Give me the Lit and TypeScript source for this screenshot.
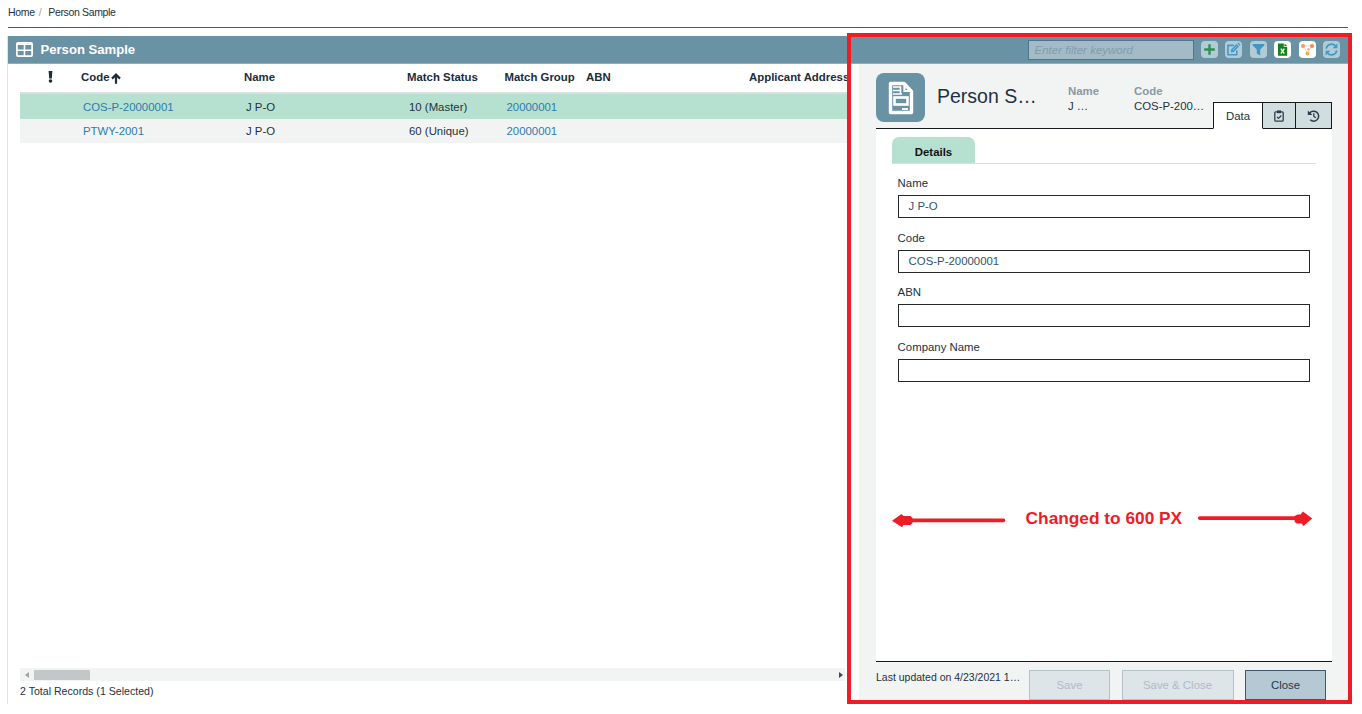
import { LitElement, html, css, svg } from "lit";
import { customElement } from "lit/decorators.js";
import { classMap } from "lit/directives/class-map.js";

interface PersonRow {
  code: string;
  name: string;
  status: string;
  group: string;
  selected: boolean;
}

const ROWS: PersonRow[] = [
  { code: "COS-P-20000001", name: "J P-O", status: "10 (Master)", group: "20000001", selected: true },
  { code: "PTWY-2001", name: "J P-O", status: "60 (Unique)", group: "20000001", selected: false },
];

const FIELDS = [
  { label: "Name", value: "J P-O" },
  { label: "Code", value: "COS-P-20000001" },
  { label: "ABN", value: "" },
  { label: "Company Name", value: "" },
];

const TOOLS = [
  {
    name: "add",
    solid: false,
    art: svg`<path d="M8.5 3.2v10.6M3.2 8.5h10.6" stroke="#2f9150" stroke-width="2.4" fill="none"/>`,
  },
  {
    name: "edit",
    solid: false,
    art: svg`<path d="M11.8 9.6v4.2H2.9V4.4h6" stroke="#3f9bca" stroke-width="1.6" fill="none" stroke-linejoin="round"/>
      <path d="M5.8 11.4l.4-3 5.2-5.4 2.600 2.500-5.200 5.400z" fill="#3f9bca"/><path d="M12.200 2.300l1-.9 2.400 2.400-1 .9z" fill="#3f9bca"/>
      <path d="M7.900 9.300l3.800-4" stroke="#b4cad5" stroke-width=".7"/>`,
  },
  {
    name: "filter",
    solid: false,
    art: svg`<path d="M2.6 3h11.8v1.3L10.2 8.6v5.8l-3.4-2V8.6L2.6 4.3z" fill="#3f97c4"/>`,
  },
  {
    name: "excel",
    solid: true,
    art: svg`<path d="M4 2.4h5.8v3.4h3.4v9H4z" fill="#15831c"/><path d="M10.5 2.4l2.7 2.7h-2.7z" fill="#15831c"/>
      <path d="M6.9 7.6l3.4 5M10.3 7.6l-3.4 5" stroke="#fff" stroke-width="1.4"/>`,
  },
  {
    name: "graph",
    solid: true,
    art: svg`<path d="M4 4.9L8.5 12l4.3-7M4 4.9h9" stroke="#f7cdb4" stroke-width=".9" fill="none"/>
      <circle cx="4" cy="4.9" r="2" fill="#ef9a6a"/><circle cx="13" cy="4.9" r="2" fill="#f3854f"/><circle cx="9.4" cy="8.2" r="1.2" fill="#f4b08a"/>
      <circle cx="8.5" cy="12.6" r="2" fill="#eea95f"/>`,
  },
  {
    name: "refresh",
    solid: false,
    art: svg`<path d="M3.2 7.6A5.4 5.4 0 0 1 12.6 5M13.8 9.4A5.4 5.4 0 0 1 4.4 12" stroke="#3f9bca" stroke-width="1.7" fill="none"/>
      <path d="M14.4 2.4v4.9H9.5zM2.6 14.6V9.7h4.9z" fill="#3f9bca"/>`,
  },
];

@customElement("app-root")
export class AppRoot extends LitElement {
  static styles = css`
    :host {
      display: block;
      position: relative;
      width: 1362px;
      height: 714px;
      overflow: hidden;
      background: #fff;
      color: #22313f;
      font: 11.4px/14px "Liberation Sans", Arial, sans-serif;
    }
    * { box-sizing: border-box; }
    svg { display: block; flex: none; }
    .crumbs {
      display: flex;
      height: 28px;
      margin: 0 14px 0 8px;
      padding-top: 5px;
      border-bottom: 1px solid #44586a;
      font-size: 10.5px;
      letter-spacing: -0.34px;
    }
    .slash { margin: 0 7px 0 4px; color: #9aa3aa; }
    .window {
      display: flex;
      flex-direction: column;
      width: 1341px;
      height: 668px;
      margin: 8px 0 0 7px;
      border-left: 1px solid #e1e4e6;
    }
    .bar {
      display: flex;
      align-items: center;
      flex: none;
      height: 28px;
      padding: 0 8px 0 8px;
      background: #6992a5;
      border-bottom: 1px solid #8fadbb;
      color: #fff;
    }
    .bar-title { margin-left: 7.5px; font-size: 13.1px; font-weight: bold; }
    .filter {
      width: 166px;
      height: 20px;
      margin-left: auto;
      padding: 2px 6px;
      background: #a3bbc7;
      border: 1px solid #4d7591;
      color: #7f9dac;
      font-size: 11.5px;
      font-style: italic;
    }
    .tools { display: flex; gap: 7.4px; margin-left: 7.5px; }
    .tool { width: 17px; height: 17px; border-radius: 4px; background: #b4cad5; }
    .solid { background: #fff; }
    .body { display: flex; flex: 1; min-height: 0; }
    .list {
      display: flex;
      flex-direction: column;
      width: 851px;
      padding-left: 12px;
    }
    .row {
      display: grid;
      grid-template-columns: 61px 163px 163px 97.5px 81.5px 163px 1fr;
      align-items: center;
      height: 24px;
      width: 827px;
      padding-left: 2px;
      background: #f2f4f4;
      white-space: nowrap;
      overflow: hidden;
    }
    .row.selected { background: #b6e1d1; height: 25px; }
    .row.head {
      height: 30px;
      padding: 0 0 2px;
      background: #fff;
      border-bottom: 2px solid #dadfdf;
      color: #1d2c3b;
      font-weight: bold;
    }
    .bang { padding-left: 28px; }
    .sort { display: flex; align-items: center; gap: 1.5px; }
    .arrow { padding-top: 3px; }
    .link { color: #2b7cae; }
    .scroll {
      display: flex;
      align-items: center;
      justify-content: space-between;
      height: 13px;
      width: 825px;
      margin-top: auto;
      padding: 0 2px 0 5px;
      background: #f2f3f3;
    }
    .thumb { width: 56px; height: 10px; margin: 0 auto 0 5px; background: #c3c7c8; }
    .total { margin: 3px 0 6px; font-size: 10.6px; }
    .detail {
      display: flex;
      flex-direction: column;
      flex: 1;
      padding: 0 16px 0 17px;
      background: #f2f4f4;
    }
    .summary { display: flex; flex: none; height: 64px; padding-top: 9px; }
    .badge {
      display: grid;
      place-items: center;
      width: 49px;
      height: 49px;
      border-radius: 8px;
      background: #6992a5;
    }
    .title { width: 131px; margin: 9px 0 0 12px; font-size: 19.5px; line-height: 28px; white-space: nowrap; }
    .fact { width: 66px; padding-top: 11px; line-height: 15px; white-space: nowrap; }
    .fact-label { color: #8899a3; font-weight: bold; }
    .tabs { display: flex; width: 119px; height: 27px; margin: 29px 0 0 auto; }
    .tab {
      display: grid;
      place-items: center;
      width: 33px;
      border: 1px solid #15191d;
      border-left: 0;
      background: #d0dedf;
    }
    .tab-active { width: 50px; background: #fff; border-left: 1px solid #15191d; border-bottom-color: #fff; }
    .tab-last { width: 36px; }
    .rule { flex: none; height: 1px; margin-right: 119px; background: #15191d; }
    .card {
      flex: none;
      height: 533px;
      padding: 8px 16px 0;
      background: #fff;
      border-bottom: 1px solid #15191d;
    }
    .section { display: flex; border-bottom: 1px solid #dcdfe0; }
    .section-tab {
      width: 83px;
      padding: 8px 0 4px;
      border-radius: 7px 7px 0 0;
      background: #b6e1d1;
      color: #111;
      font-weight: bold;
      text-align: center;
    }
    .form { padding: 12px 6px 0 5.6px; }
    .field { height: 54.6px; }
    .box {
      height: 23px;
      margin-top: 5px;
      padding: 3px 10px;
      border: 1px solid #25292c;
      color: #31536a;
    }
    .foot { display: flex; padding-top: 8px; }
    .updated { width: 153px; font-size: 10.5px; white-space: nowrap; }
    .buttons { display: flex; gap: 11.5px; }
    .btn {
      display: grid;
      place-items: center;
      width: 81px;
      height: 30px;
      border: 1px solid #b3c3ca;
      background: #dde5e8;
      color: #aebcc2;
    }
    .btn.wide { width: 112px; }
    .btn.primary { background: #b5c9d5; border-color: #41566c; color: #25394a; }
    .frame {
      position: absolute;
      left: 847px;
      top: 33px;
      width: 505px;
      height: 671px;
      border: 4px solid #ee1c25;
    }
    .note {
      position: absolute;
      left: 891px;
      top: 509px;
      display: flex;
      width: 422px;
      color: #ee1c25;
      font-size: 17.3px;
      font-weight: bold;
      line-height: 18px;
      white-space: nowrap;
    }
    .note-text { flex: 1; padding-left: 19.6px; }
  `;

  render() {
    return html`
      <nav class="crumbs"><span>Home</span><span class="slash">/</span><span>Person Sample</span></nav>
      <main class="window">
        <header class="bar">
          <svg width="17" height="15" viewBox="0 0 17 15">
            <rect x=".9" y=".9" width="15.2" height="13.2" rx="1" fill="none" stroke="#fff" stroke-width="1.7" />
            <path d="M1 2.2h15M8.5 2v12M1 8.3h15" stroke="#fff" stroke-width="1.6" />
          </svg>
          <span class="bar-title">Person Sample</span>
          <div class="filter">Enter filter keyword</div>
          <div class="tools">
            ${TOOLS.map(
              (t) => html`<div class=${classMap({ tool: true, solid: t.solid })}>
                <svg width="17" height="17" viewBox="0 0 17 17">${t.art}</svg>
              </div>`
            )}
          </div>
        </header>
        <div class="body">${this.renderList()}${this.renderDetail()}</div>
      </main>
      <div class="frame"></div>
      <div class="note">
        <svg width="115" height="20" viewBox="0 0 115 20">
          <path d="M18 11.4h94.5" stroke="#ee1c25" stroke-width="3.6" stroke-linecap="round" />
          <path d="M1 11.8L10.5 5l2 2h7l2 2v5l-2 2h-7l-1.5 2.2z" fill="#ee1c25" />
        </svg>
        <span class="note-text">Changed to 600 PX</span>
        <svg width="116" height="20" viewBox="0 0 116 20">
          <path d="M2.8 9.1H100" stroke="#ee1c25" stroke-width="3.8" stroke-linecap="round" />
          <path d="M115.2 9.6L106.5 17l-2-2.5h-5l-2-2V7l3-1.5h3l2.5-3z" fill="#ee1c25" />
        </svg>
      </div>
    `;
  }

  private renderList() {
    return html`<section class="list">
      <div class="row head">
        <span class="bang">
          <svg width="5" height="12" viewBox="0 0 5 12">
            <path d="M.6 0h3.8l-.6 7.4H1.2z" fill="#1d2c3b" /><circle cx="2.5" cy="10" r="1.8" fill="#1d2c3b" />
          </svg>
        </span>
        <span class="sort">Code
          <svg class="arrow" width="10" height="14" viewBox="0 0 10 11">
            <path d="M5 10.8V2M1 5.600L5 1.600l4 4" fill="none" stroke="#1d2c3b" stroke-width="2.2" />
          </svg>
        </span>
        <span>Name</span><span>Match Status</span><span>Match Group</span><span>ABN</span><span>Applicant Address</span>
      </div>
      ${ROWS.map(
        (r) => html`<div class=${classMap({ row: true, selected: r.selected })}>
          <span></span><span class="link">${r.code}</span><span>${r.name}</span><span>${r.status}</span>
          <span class="link">${r.group}</span>
        </div>`
      )}
      <div class="scroll">
        <svg width="4" height="6" viewBox="0 0 4 6"><path d="M4 0v6L0 3z" fill="#a0a4a6" /></svg>
        <div class="thumb"></div>
        <svg width="4" height="6" viewBox="0 0 4 6"><path d="M0 0v6l4-3z" fill="#454a4d" /></svg>
      </div>
      <div class="total">2 Total Records (1 Selected)</div>
    </section>`;
  }

  private renderDetail() {
    return html`<aside class="detail">
      <div class="summary">
        <div class="badge">
          <svg width="26" height="34" viewBox="0 0 26 34">
            <path d="M2.5 2.500h13.500l7.500 8v21h-21z" fill="none" stroke="#fff" stroke-width="3.4" stroke-linejoin="round" />
            <path d="M16.500 2.500v7.500h7" fill="none" stroke="#fff" stroke-width="2.2" />
            <path d="M5 6h7.500v7M5 9.500h7.500M5 13h9" fill="none" stroke="#fff" stroke-width="1.6" />
            <rect x="6.500" y="16.500" width="13" height="7" fill="none" stroke="#fff" stroke-width="2.6" />
            <path d="M14 28h6" stroke="#fff" stroke-width="1.8" />
          </svg>
        </div>
        <div class="title">Person S…</div>
        <div class="fact"><div class="fact-label">Name</div><div>J …</div></div>
        <div class="fact"><div class="fact-label">Code</div><div>COS-P-200…</div></div>
        <div class="tabs">
          <div class="tab tab-active">Data</div>
          <div class="tab">
            <svg width="10" height="12" viewBox="0 0 10 12">
              <rect x=".8" y="1.8" width="8.4" height="9.4" rx="1" fill="none" stroke="#2c3e4b" stroke-width="1.3" />
              <path d="M3 .4h4v2.800H3z" fill="#2c3e4b" /><path d="M3 6.800l1.500 1.500L7.300 5.500" fill="none" stroke="#2c3e4b" stroke-width="1.2" />
            </svg>
          </div>
          <div class="tab tab-last">
            <svg width="13" height="12" viewBox="0 0 12 12">
              <path d="M2 3.300A5 5 0 1 1 2.700 9.800" fill="none" stroke="#2c3e4b" stroke-width="1.5" />
              <path d="M.3.500v4.600h4.600z" fill="#2c3e4b" /><path d="M6.300 3.200v3l2 1.500" fill="none" stroke="#2c3e4b" stroke-width="1.3" />
            </svg>
          </div>
        </div>
      </div>
      <div class="rule"></div>
      <div class="card">
        <div class="section"><div class="section-tab">Details</div></div>
        <div class="form">
          ${FIELDS.map((f) => html`<div class="field"><div>${f.label}</div><div class="box">${f.value}</div></div>`)}
        </div>
      </div>
      <footer class="foot">
        <div class="updated">Last updated on 4/23/2021 1…</div>
        <div class="buttons">
          <div class="btn">Save</div>
          <div class="btn wide">Save &amp; Close</div>
          <div class="btn primary">Close</div>
        </div>
      </footer>
    </aside>`;
  }
}
